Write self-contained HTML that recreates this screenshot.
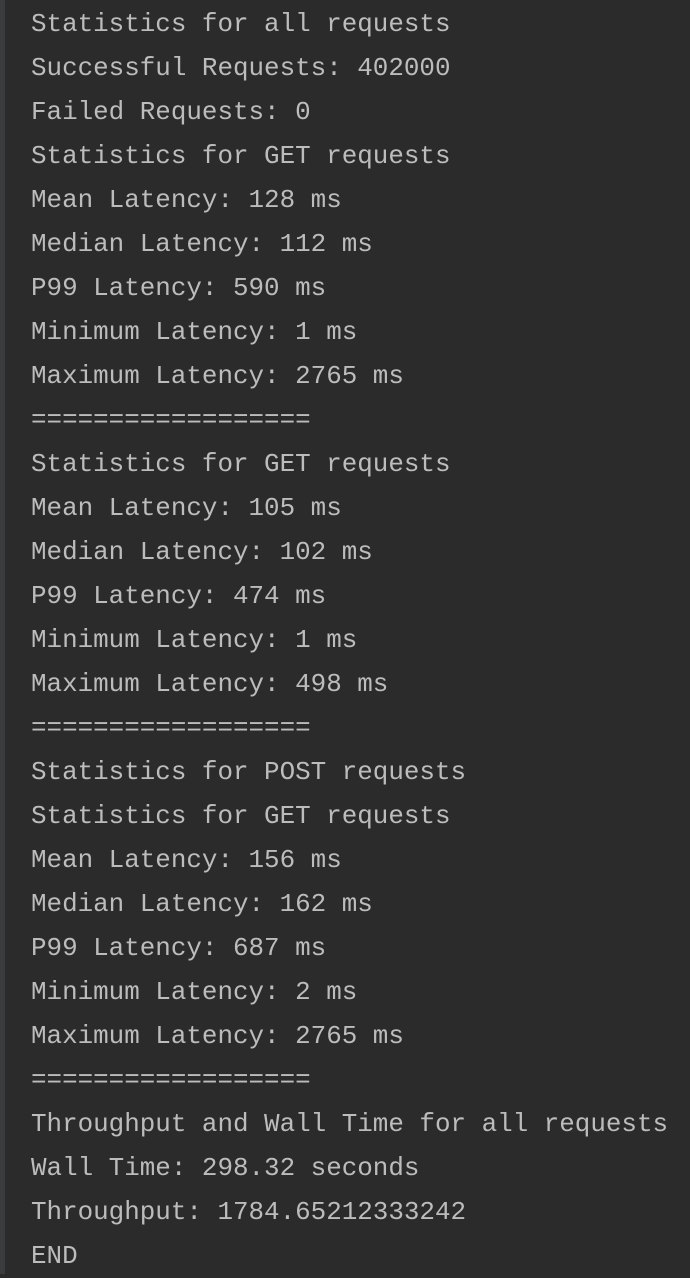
<!DOCTYPE html>
<html><head><meta charset="utf-8"><style>
html,body{margin:0;padding:0;}
body{width:690px;height:1274px;background:#2b2b2b;position:relative;overflow:hidden;}
.strip{position:absolute;left:0;top:0;width:5px;height:1274px;background:#3a3d40;}
pre{position:absolute;left:31px;top:2px;margin:0;font-family:"Liberation Mono",monospace;font-size:25.9px;line-height:44px;color:#bcbcbc;}
</style></head><body><div class="strip"></div><pre>Statistics for all requests
Successful Requests: 402000
Failed Requests: 0
Statistics for GET requests
Mean Latency: 128 ms
Median Latency: 112 ms
P99 Latency: 590 ms
Minimum Latency: 1 ms
Maximum Latency: 2765 ms
==================
Statistics for GET requests
Mean Latency: 105 ms
Median Latency: 102 ms
P99 Latency: 474 ms
Minimum Latency: 1 ms
Maximum Latency: 498 ms
==================
Statistics for POST requests
Statistics for GET requests
Mean Latency: 156 ms
Median Latency: 162 ms
P99 Latency: 687 ms
Minimum Latency: 2 ms
Maximum Latency: 2765 ms
==================
Throughput and Wall Time for all requests
Wall Time: 298.32 seconds
Throughput: 1784.65212333242
END</pre></body></html>
